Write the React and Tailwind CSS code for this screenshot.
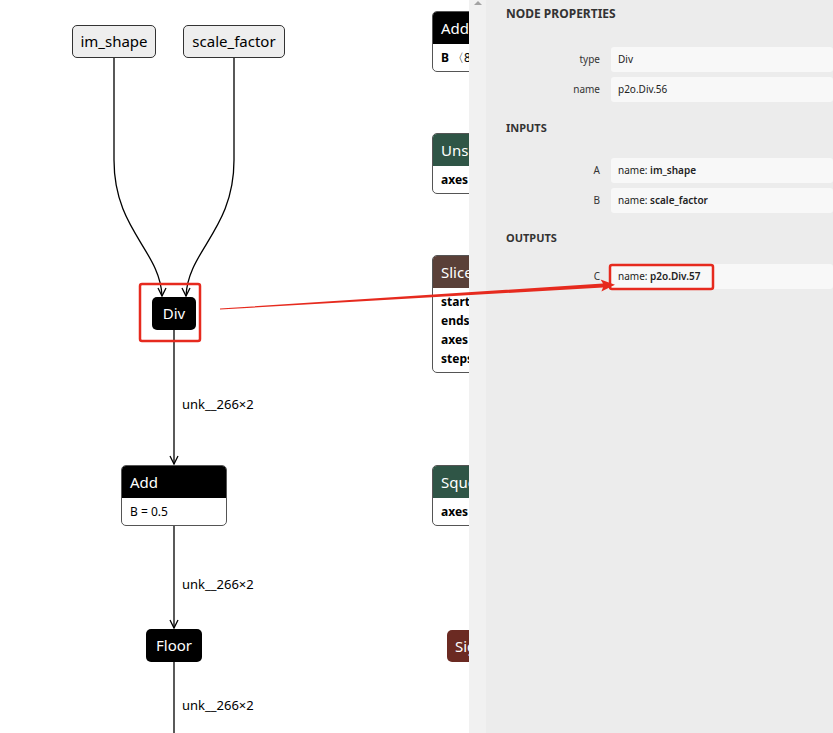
import React from 'react';

const font = { fontFamily: '"Noto Sans", "Open Sans", sans-serif' };

const Arrow = ({ x, y }) => (
  <path d={`M${x - 4} ${y - 8} L${x} ${y} L${x + 4} ${y - 8}`} fill="none" stroke="#000" strokeWidth="1.3" />
);

const Edges = () => (
  <svg className="absolute inset-0" width="833" height="733">
    <g fill="none" stroke="#000" strokeWidth="1.3">
      <path d="M114 57 L114 160 C114 230 160 250 162 296" />
      <path d="M234 57 L234 160 C234 230 188 250 186 296" />
      <path d="M174 330 L174 464" />
      <path d="M174 525 L174 628" />
      <path d="M174 662 L174 733" />
    </g>
    <Arrow x={162} y={296} />
    <Arrow x={186} y={296} />
    <Arrow x={174} y={464} />
    <Arrow x={174} y={628} />
  </svg>
);

const PlainNode = ({ label, className }) => (
  <div className={`absolute flex items-center justify-center rounded-[5px] border border-[#333] bg-[#eeeeee] text-[15px] text-black ${className}`}>
    {label}
  </div>
);

const OpNode = ({ label, className }) => (
  <div className={`absolute flex items-center justify-center rounded-[5px] bg-black text-[15px] text-white ${className}`}>
    {label}
  </div>
);

const BoxNode = ({ title, head, rows, className }) => (
  <div className={`absolute overflow-hidden rounded-[5px] border border-[#555] bg-white ${className}`}>
    <div className={`flex h-[32px] items-center px-[8px] text-[15px] text-white ${head}`}>{title}</div>
    <div className="flex flex-col px-[8px] py-[4px] text-[12px] leading-[19px] text-black">
      {rows.map((r, i) => (
        <div key={i} className="whitespace-nowrap">{r}</div>
      ))}
    </div>
  </div>
);

const EdgeLabel = ({ y }) => (
  <div className="absolute left-[182px] text-[13px] text-black" style={{ top: y }}>
    unk__266×2
  </div>
);

const Prop = ({ label, children }) => (
  <div className="flex items-center">
    <div className="w-[95px] pr-[1px] text-right text-[10px] text-[#333]">{label}</div>
    <div className="ml-[10px] flex h-[25px] flex-1 items-center rounded-[3px] bg-[#f8f8f8] pl-[7px] text-[10px] text-[#222]">
      {children}
    </div>
  </div>
);

const Sidebar = () => (
  <div className="absolute bottom-0 left-[469px] right-0 top-0 flex">
    <div className="relative w-[17px] bg-[#f1f1f1]">
      <div className="absolute left-[5px] top-[1px] h-0 w-0 border-x-[4px] border-b-[4px] border-x-transparent border-b-[#a3a3a3]" />
    </div>
    <div className="flex-1 bg-[#ececec] pl-[20px]">
      <div className="pt-[5px] text-[12px] font-bold text-[#333]">NODE PROPERTIES</div>
      <div className="mt-[24px] flex flex-col gap-[5px]">
        <Prop label="type">Div</Prop>
        <Prop label="name">p2o.Div.56</Prop>
      </div>
      <div className="mt-[18px] text-[11px] font-bold text-[#333]">INPUTS</div>
      <div className="mt-[21px] flex flex-col gap-[5px]">
        <Prop label="A">
          name:&nbsp;<b className="font-semibold">im_shape</b>
        </Prop>
        <Prop label="B">
          name:&nbsp;<b className="font-semibold">scale_factor</b>
        </Prop>
      </div>
      <div className="mt-[17px] text-[11px] font-bold text-[#333]">OUTPUTS</div>
      <div className="mt-[18px] flex flex-col">
        <Prop label="C">
          name:&nbsp;<b className="font-semibold">p2o.Div.57</b>
        </Prop>
      </div>
    </div>
  </div>
);

const Callout = () => (
  <svg className="pointer-events-none absolute inset-0" width="833" height="733">
    <rect x="140" y="284" width="60" height="57" rx="2" fill="none" stroke="#e62a1e" strokeWidth="2.5" />
    <rect x="610" y="265" width="103" height="24" rx="2" fill="none" stroke="#e62a1e" strokeWidth="2.5" />
    <polygon
      points="220,308.5 603,283.5 600.6,279.6 615,284.7 601.4,291.6 603,287.5 220,309.5"
      fill="#e62a1e"
    />
  </svg>
);

export default function App() {
  return (
    <div className="relative h-[733px] w-[833px] overflow-hidden bg-white" style={font}>
      <Edges />
      <PlainNode label="im_shape" className="left-[72px] top-[25px] h-[33px] w-[84px]" />
      <PlainNode label="scale_factor" className="left-[183px] top-[25px] h-[33px] w-[102px]" />
      <OpNode label="Div" className="left-[152px] top-[297px] h-[33px] w-[44px]" />
      <BoxNode title="Add" head="bg-black" rows={['B = 0.5']} className="left-[121px] top-[465px] w-[106px]" />
      <OpNode label="Floor" className="left-[146px] top-[629px] h-[33px] w-[56px]" />
      <EdgeLabel y={395} />
      <EdgeLabel y={575} />
      <EdgeLabel y={696} />

      <BoxNode
        title="Add"
        head="bg-black"
        rows={[<span key="b"><b>B</b> 〈8×1〉</span>]}
        className="left-[432px] top-[11px] w-[80px]"
      />
      <BoxNode title="Unsqueeze" head="bg-[#2f5546]" rows={[<b key="a">axes</b>]} className="left-[432px] top-[133px] w-[100px]" />
      <BoxNode
        title="Slice"
        head="bg-[#5a4038]"
        rows={[<b key="1">starts</b>, <b key="2">ends</b>, <b key="3">axes</b>, <b key="4">steps</b>]}
        className="left-[432px] top-[255px] w-[80px]"
      />
      <BoxNode title="Squeeze" head="bg-[#2f5546]" rows={[<b key="a">axes</b>]} className="left-[432px] top-[465px] w-[90px]" />
      <div className="absolute left-[447px] top-[630px] flex h-[32px] w-[80px] items-center rounded-[5px] bg-[#6b2a22] pl-[8px] text-[15px] text-white">
        Sigmoid
      </div>

      <Sidebar />
      <Callout />
    </div>
  );
}
